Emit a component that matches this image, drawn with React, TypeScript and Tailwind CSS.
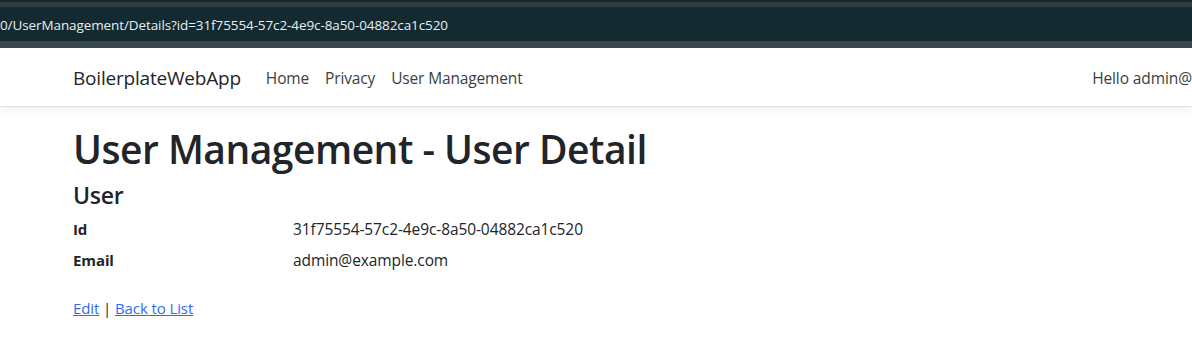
import React from 'react';

const font = { fontFamily: '"Open Sans", "Noto Sans", sans-serif' };

export default function App() {
  return (
    <div className="h-[353px] w-[1192px] overflow-hidden bg-white text-[#212529]" style={font}>
      {/* Address bar strip */}
      <div className="h-[48px] bg-[#1f2a30] flex flex-col">
        <div className="h-[2px] bg-[#1c252a]" />
        <div className="h-[5px] bg-[#2e3e43]" />
        <div className="h-[34px] bg-[#132a30] flex items-center pt-[2px] text-[13.5px] text-[#e8eef0] tracking-[-0.1px] whitespace-nowrap">
          0/UserManagement/Details?id=31f75554-57c2-4e9c-8a50-04882ca1c520
        </div>
        <div className="flex-1 bg-[#3a494e]" />
      </div>

      {/* Navbar */}
      <nav className="h-[59px] pt-[3px] border-b border-[#dee2e6] shadow-[0_4px_10px_rgba(0,0,0,0.06)] flex items-center pl-[73px] whitespace-nowrap">
        <span className="text-[19px] text-[#212529] mr-[25px] tracking-[-0.2px]">BoilerplateWebApp</span>
        <div className="flex gap-[16px] text-[15.5px] text-[#3a3f44] tracking-[-0.15px]">
          <span>Home</span>
          <span>Privacy</span>
          <span>User Management</span>
        </div>
        <span className="ml-auto text-[15.5px] text-[#3a3f44] tracking-[-0.1px]">Hello admin@</span>
      </nav>

      {/* Content */}
      <main className="pl-[73px] pt-[19px]">
        <h1 className="text-[39px] font-semibold leading-[1.2] tracking-[-0.5px] mb-[9px]">User Management - User Detail</h1>
        <h4 className="text-[23px] font-semibold leading-[1.2] tracking-[-0.3px] mb-[8px]">User</h4>
        <dl className="grid grid-cols-[220px_1fr] text-[15.5px] gap-y-[7px] leading-[24px] tracking-[-0.1px]">
          <dt className="font-bold text-[15px]">Id</dt>
          <dd>31f75554-57c2-4e9c-8a50-04882ca1c520</dd>
          <dt className="font-bold text-[15px]">Email</dt>
          <dd>admin@example.com</dd>
        </dl>
        <div className="mt-[25px] text-[15px] tracking-[-0.1px]">
          <a href="#" className="text-[#2f6bf5] underline">Edit</a>
          <span> | </span>
          <a href="#" className="text-[#2f6bf5] underline">Back to List</a>
        </div>
      </main>
    </div>
  );
}
